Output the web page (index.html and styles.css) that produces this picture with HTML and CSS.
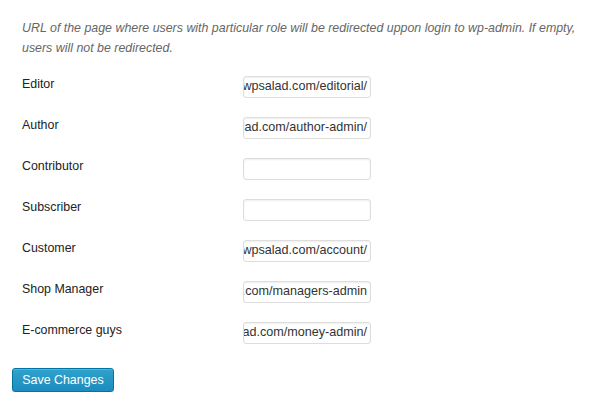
FILE: index.html
```html
<!DOCTYPE html>
<html>
<head>
<meta charset="utf-8">
<link rel="stylesheet" href="styles.css">
</head>
<body>
<div class="wrap">
  <p class="description">URL of the page where users with particular role will be redirected uppon login to wp-admin. If empty, users will not be redirected.</p>
  <div class="rows">
    <div class="row"><span class="label">Editor</span><div class="field"><span>wpsalad.com/editorial/</span></div></div>
    <div class="row"><span class="label">Author</span><div class="field"><span>wpsalad.com/author-admin/</span></div></div>
    <div class="row"><span class="label">Contributor</span><div class="field"></div></div>
    <div class="row"><span class="label">Subscriber</span><div class="field"></div></div>
    <div class="row"><span class="label">Customer</span><div class="field"><span>wpsalad.com/account/</span></div></div>
    <div class="row"><span class="label">Shop Manager</span><div class="field"><span>wpsalad.com/managers-admin</span></div></div>
    <div class="row"><span class="label">E-commerce guys</span><div class="field"><span>wpsalad.com/money-admin/</span></div></div>
  </div>
  <div class="actions"><button class="button-primary">Save Changes</button></div>
</div>
</body>
</html>
```
FILE: styles.css
```css
html, body {
  margin: 0;
  padding: 0;
  background: #fff;
}
body {
  font-family: "Liberation Sans", Arial, sans-serif;
  font-size: 12.4px;
  color: #222;
}
.wrap {
  padding: 18px 0 0 22px;
}
.description {
  margin: 0;
  width: 560px;
  font-style: italic;
  color: #666;
  line-height: 20px;
}
.rows {
  margin-top: 18px;
  display: flex;
  flex-direction: column;
}
.row {
  display: grid;
  grid-template-columns: 221px 128px;
  height: 41px;
  align-items: start;
}
.label {
  line-height: 16px;
  color: #222;
}
.field {
  box-sizing: border-box;
  height: 22px;
  border: 1px solid #ddd;
  border-radius: 3px;
  box-shadow: inset 0 1px 2px rgba(0,0,0,0.07);
  background: #fff;
  display: flex;
  justify-content: flex-end;
  overflow: hidden;
  white-space: nowrap;
  padding: 0 3px 1px 3px;
  line-height: 18px;
  color: #333;
  font-size: 12.6px;
}
.field span {
  flex: none;
}
.actions {
  margin-top: 5px;
  margin-left: -10px;
}
.button-primary {
  box-sizing: border-box;
  height: 24px;
  width: 102px;
  padding: 0 0 1px;
  font-family: "Liberation Sans", Arial, sans-serif;
  font-size: 12.4px;
  line-height: 22px;
  color: #fff;
  background: linear-gradient(to bottom, #2ea2cc, #1e8cbe);
  border: 1px solid #0074a2;
  border-radius: 3px;
  box-shadow: inset 0 1px 0 rgba(120,200,230,0.5), 0 1px 0 rgba(0,0,0,0.15);
  cursor: pointer;
}
```
